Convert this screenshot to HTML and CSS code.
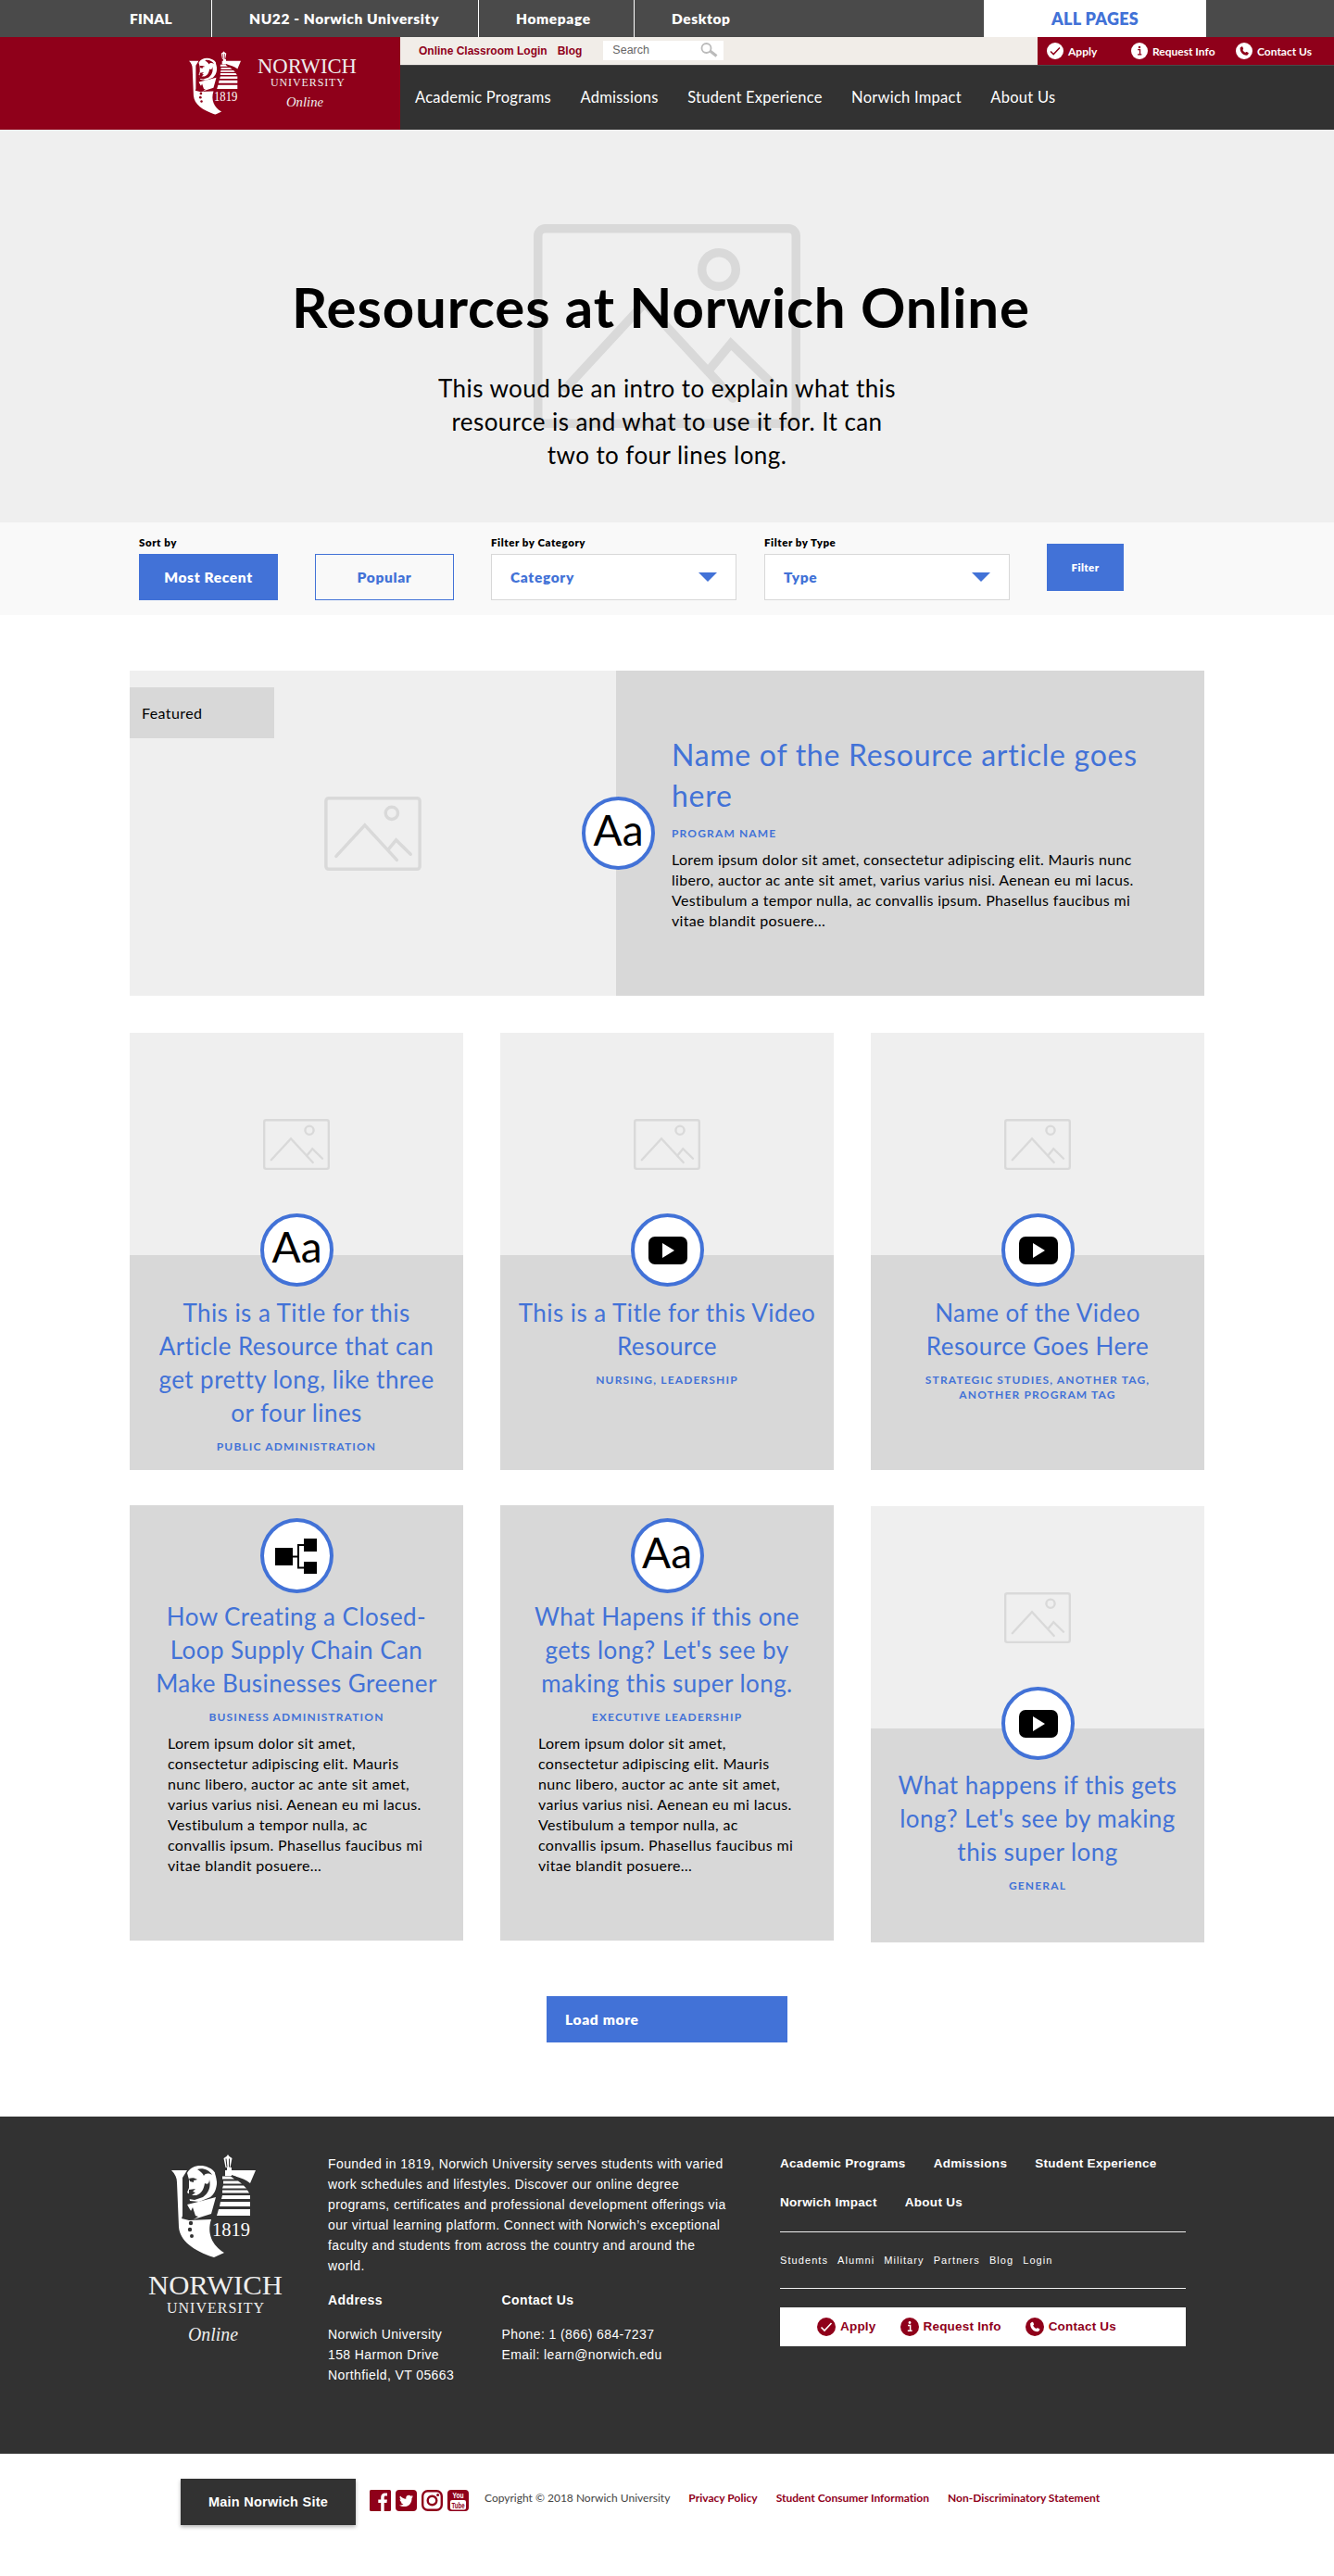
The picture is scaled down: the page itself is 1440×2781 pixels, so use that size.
FILE: index.html
```html
<!DOCTYPE html>
<html lang="en">
<head>
<meta charset="utf-8">
<title>Resources at Norwich Online</title>
<link rel="stylesheet" href="styles.css">
</head>
<body>
<svg class="defs" aria-hidden="true">
  <symbol id="picture" viewBox="0 0 288 220">
    <g fill="none" stroke="#d9d9d9" stroke-width="9.5" stroke-linecap="round">
      <rect x="4.75" y="4.75" width="278.5" height="210.5" rx="8"/>
      <circle cx="200" cy="49" r="18.3"/>
      <path d="M35 177 120 85 215 188M189 158l24-29 43 42" stroke-linejoin="miter"/>
    </g>
  </symbol>
  <symbol id="play" viewBox="0 0 42 30">
    <rect width="42" height="30" rx="7"/>
    <path d="M15 7v16l13-8z" fill="#fff"/>
  </symbol>
  <symbol id="chart" viewBox="0 0 46 40">
    <path d="M0 11h19v19H0zM31 1h14v14H31zM31 26h14v13H31z"/>
    <path d="M19 20.500h6M31 8h-6v24.500h6" fill="none" stroke="#000" stroke-width="2"/>
  </symbol>
  <symbol id="check" viewBox="0 0 20 20">
    <circle cx="10" cy="10" r="10" fill="currentColor"/>
    <path d="M4.500 10.500l3.500 3.500 7.500-8" fill="none" class="mark" stroke-width="1.600"/>
  </symbol>
  <symbol id="info" viewBox="0 0 20 20">
    <circle cx="10" cy="10" r="10" fill="currentColor"/>
    <path d="M8 8.500h2.600v5.500M7.800 14.300h4.800" fill="none" class="mark" stroke-width="1.500"/>
    <circle cx="10" cy="5.500" r="1.400" class="dot"/>
  </symbol>
  <symbol id="phone" viewBox="0 0 20 20">
    <circle cx="10" cy="10" r="10" fill="currentColor"/>
    <path d="M5.200 6.200 7 4.800c.6-.3 1.100 0 1.300.5l.7 1.800c.2.500 0 .9-.8 1.500.5 1.600 1.700 2.800 3.300 3.400.6-.8 1-1 1.500-.8l1.800.8c.6.300.7.800.4 1.400l-1.200 1.700C8.800 15.800 4.700 11.500 5.200 6.200z" class="dot"/>
  </symbol>
  <symbol id="shield" viewBox="0 0 91 111">
    <g fill="currentColor">
      <path d="M0 17h17l-5 8v41l-1 3 8 2 24-1c-5 15 1 28 14 36l-11 5C24 104 9 93 8 78L6 30c0-5-2-9-6-13z"/>
      <path d="M17 20c4-8 15-10 23-6 8 3 10 10 9 18-1 7-3 11-7 14l-12 5-10-1-1-5 1-2-3-2 2-5 0-9z"/>
      <path d="M17 54l12-3 19-5-5 18-19 6z"/>
      <path d="M46 17h12v6l3 0v-3l-1-3M65 17h26l-6 14c-5-5-12-6-20-9z"/>
      <path d="M55 23.500h9l4 3H55zM56 28.500h16l4 3H56zM56 33.500h22l3 3H55zM55 38.500h27l2 3H55zM55 44h30v4H54zM53 51h32v5H52zM51 59h34v7H49z"/>
      <path d="M60 14h5v9h-5zM56.500 4l3-2 1.500-2 1.500 2 3 2-2 10h-5z"/>
    </g>
    <g class="cut">
      <path d="M19 26c3-1 6-1 9 1l-4 1v2l-4-1zM19 38l7-1-3 3 3 1-4 3 5 0c6-2 8-7 9-13 3 2 5 0 5-4 2 8-1 15-7 19l-9 3-6-1zM28 16c6-2 13 1 16 6-4-2-7-2-9 1-1-3-4-5-7-7z"/>
      <path d="M13 66l7-3 3-6 3 9 3 1-5 3z"/>
      <circle cx="21" cy="74" r="2.200"/><circle cx="20" cy="81" r="2.200"/><circle cx="22" cy="88" r="2"/>
    </g>
    <path d="M15 53l10 16M48 20c5 16 3 30-3 46" class="seam"/>
    <path d="M59 4.500l1 9M62.500 4.500v9" class="seam thin"/>
  </symbol>
</svg>

<div class="crumbs">
  <span class="crumb crumb-first">FINAL</span>
  <span class="crumb crumb-project">NU22 - Norwich University</span>
  <span class="crumb crumb-page">Homepage</span>
  <span class="crumb crumb-device">Desktop</span>
  <a class="all-pages">ALL PAGES</a>
</div>

<header class="header">
  <div class="brand">
    <svg class="brand-shield" viewBox="0 0 91 111"><use href="#shield"/><text x="44" y="88" class="year" textLength="41" lengthAdjust="spacingAndGlyphs">1819</text></svg>
    <svg class="brand-name" viewBox="0 0 108 66">
      <text x="0" y="17" font-size="23" textLength="107" lengthAdjust="spacingAndGlyphs">NORWICH</text>
      <text x="14" y="31" font-size="12" textLength="80" lengthAdjust="spacing">UNIVERSITY</text>
      <text x="31" y="53" font-size="15" font-style="italic" textLength="40" lengthAdjust="spacingAndGlyphs">Online</text>
    </svg>
  </div>
  <div class="header-main">
    <div class="utility">
      <div class="utility-links">
        <a>Online Classroom Login</a><a>Blog</a>
        <div class="search"><span>Search</span>
          <svg width="20" height="16" viewBox="0 0 20 16"><g fill="none" stroke="#bbb"><circle cx="6.500" cy="6" r="5" stroke-width="1.800"/><path d="M10.500 9l7 5.500" stroke-width="3"/></g></svg>
        </div>
      </div>
      <div class="quick">
        <a class="q1"><svg><use href="#check"/></svg>Apply</a>
        <a class="q2"><svg><use href="#info"/></svg>Request Info</a>
        <a class="q3"><svg><use href="#phone"/></svg>Contact Us</a>
      </div>
    </div>
    <nav class="nav">
      <a>Academic Programs</a><a>Admissions</a><a>Student Experience</a><a>Norwich Impact</a><a>About Us</a>
    </nav>
  </div>
</header>

<section class="hero">
  <svg class="hero-picture"><use href="#picture"/></svg>
  <h1>Resources at Norwich Online</h1>
  <p>This woud be an intro to explain what this<br>resource is and what to use it for. It can<br>two to four lines long.</p>
</section>

<section class="filters">
  <div class="field"><label>Sort by</label><button class="btn sort">Most Recent</button></div>
  <button class="btn sort outline">Popular</button>
  <div class="field category"><label>Filter by Category</label><div class="select">Category<i></i></div></div>
  <div class="field type"><label>Filter by Type</label><div class="select">Type<i></i></div></div>
  <button class="btn apply">Filter</button>
</section>

<main class="main">
  <article class="featured">
    <div class="featured-image">
      <span class="tag">Featured</span>
      <svg><use href="#picture"/></svg>
      <div class="badge">Aa</div>
    </div>
    <div class="featured-text">
      <h2>Name of the Resource article goes<br>here</h2>
      <div class="program">PROGRAM NAME</div>
      <p>Lorem ipsum dolor sit amet, consectetur adipiscing elit. Mauris nunc<br>libero, auctor ac ante sit amet, varius varius nisi. Aenean eu mi lacus.<br>Vestibulum a tempor nulla, ac convallis ipsum. Phasellus faucibus mi<br>vitae blandit posuere…</p>
    </div>
  </article>

  <div class="grid">
    <article class="card">
      <div class="card-image"><svg><use href="#picture"/></svg><div class="badge">Aa</div></div>
      <h3>This is a Title for this<br>Article Resource that can<br>get pretty long, like three<br>or four lines</h3>
      <div class="program">PUBLIC ADMINISTRATION</div>
    </article>
    <article class="card">
      <div class="card-image"><svg><use href="#picture"/></svg><div class="badge"><svg class="play"><use href="#play"/></svg></div></div>
      <h3>This is a Title for this Video<br>Resource</h3>
      <div class="program">NURSING, LEADERSHIP</div>
    </article>
    <article class="card">
      <div class="card-image"><svg><use href="#picture"/></svg><div class="badge"><svg class="play"><use href="#play"/></svg></div></div>
      <h3>Name of the Video<br>Resource Goes Here</h3>
      <div class="program">STRATEGIC STUDIES, ANOTHER TAG,<br>ANOTHER PROGRAM TAG</div>
    </article>
    <article class="card card-plain">
      <div class="badge"><svg class="chart"><use href="#chart"/></svg></div>
      <h3>How Creating a Closed-<br>Loop Supply Chain Can<br>Make Businesses Greener</h3>
      <div class="program">BUSINESS ADMINISTRATION</div>
      <p>Lorem ipsum dolor sit amet,<br>consectetur adipiscing elit. Mauris<br>nunc libero, auctor ac ante sit amet,<br>varius varius nisi. Aenean eu mi lacus.<br>Vestibulum a tempor nulla, ac<br>convallis ipsum. Phasellus faucibus mi<br>vitae blandit posuere…</p>
    </article>
    <article class="card card-plain">
      <div class="badge">Aa</div>
      <h3>What Hapens if this one<br>gets long? Let's see by<br>making this super long.</h3>
      <div class="program">EXECUTIVE LEADERSHIP</div>
      <p>Lorem ipsum dolor sit amet,<br>consectetur adipiscing elit. Mauris<br>nunc libero, auctor ac ante sit amet,<br>varius varius nisi. Aenean eu mi lacus.<br>Vestibulum a tempor nulla, ac<br>convallis ipsum. Phasellus faucibus mi<br>vitae blandit posuere…</p>
    </article>
    <article class="card card-last">
      <div class="card-image"><svg><use href="#picture"/></svg><div class="badge"><svg class="play"><use href="#play"/></svg></div></div>
      <h3>What happens if this gets<br>long? Let's see by making<br>this super long</h3>
      <div class="program">GENERAL</div>
    </article>
  </div>

  <button class="btn load-more">Load more</button>
</main>

<footer class="footer">
  <div class="footer-brand">
    <svg class="footer-shield" viewBox="0 0 91 111"><use href="#shield"/><text x="44" y="88" class="year" textLength="41" lengthAdjust="spacingAndGlyphs">1819</text></svg>
    <svg class="footer-name" viewBox="0 0 146 95">
      <text x="0" y="38" font-size="30" textLength="145" lengthAdjust="spacingAndGlyphs">NORWICH</text>
      <text x="20" y="58" font-size="16" textLength="105" lengthAdjust="spacing">UNIVERSITY</text>
      <text x="43" y="88" font-size="21" font-style="italic" textLength="54" lengthAdjust="spacingAndGlyphs">Online</text>
    </svg>
  </div>
  <div class="about">
    <p>Founded in 1819, Norwich University serves students with varied<br>work schedules and lifestyles. Discover our online degree<br>programs, certificates and professional development offerings via<br>our virtual learning platform. Connect with Norwich’s exceptional<br>faculty and students from across the country and around the<br>world.</p>
    <div class="contacts">
      <div><h4>Address</h4><p>Norwich University<br>158 Harmon Drive<br>Northfield, VT 05663</p></div>
      <div><h4>Contact Us</h4><p>Phone: 1 (866) 684-7237<br>Email: learn@norwich.edu</p></div>
    </div>
  </div>
  <div class="footer-nav">
    <nav class="primary"><a>Academic Programs</a><a>Admissions</a><a>Student Experience</a><a>Norwich Impact</a><a>About Us</a></nav>
    <nav class="secondary"><a>Students</a><a>Alumni</a><a>Military</a><a>Partners</a><a>Blog</a><a>Login</a></nav>
    <div class="actions">
      <a><svg><use href="#check"/></svg>Apply</a>
      <a><svg><use href="#info"/></svg>Request Info</a>
      <a><svg><use href="#phone"/></svg>Contact Us</a>
    </div>
  </div>
</footer>

<div class="legal">
  <a class="main-site">Main Norwich Site</a>
  <div class="social">
    <svg viewBox="0 0 23 23"><rect width="23" height="23" rx="1.500"/><path d="M12.200 23v-9H9.300v-3.500h2.900V8c0-3 1.700-4.500 4.300-4.500l2.500.1v3h-1.700c-1.300 0-1.600.7-1.600 1.600v2.300h3.200l-.4 3.500h-2.800v9z" fill="#fff"/></svg>
    <svg viewBox="0 0 23 23"><rect width="23" height="23" rx="4"/><path d="M4 16.500c2 .1 3.400-.3 4.500-1.200-1.500-.1-2.400-.9-2.800-2h1.200c-1.500-.5-2.300-1.600-2.300-3.100l1.200.4C4.500 9.500 4.200 8 5 6.600c1.600 2 3.700 3 6.300 3.200-.5-2.400 1.200-4 3-4 1 0 1.700.4 2.300 1l2-.8c-.3.800-.7 1.300-1.300 1.700l1.700-.5-1.500 1.700c.2 5.500-3.500 9.200-8 9.200-2 0-3.900-.4-5.500-1.600z" fill="#fff"/></svg>
    <svg viewBox="0 0 23 23"><g fill="none" stroke="#8f001a"><rect x="1.200" y="1.200" width="20.600" height="20.600" rx="5.500" stroke-width="2.400"/><circle cx="11.500" cy="11.500" r="4.800" stroke-width="2.400"/></g><circle cx="17.600" cy="5.400" r="1.500"/></svg>
    <svg viewBox="0 0 23 23"><rect width="23" height="23" rx="4"/><rect x="3" y="11" width="17" height="10.500" rx="2" fill="#fff"/><text x="5.500" y="9.200" font-size="9" fill="#fff" textLength="12" lengthAdjust="spacingAndGlyphs">You</text><text x="4.500" y="19.700" font-size="9" textLength="14" lengthAdjust="spacingAndGlyphs">Tube</text></svg>
  </div>
  <span class="copyright">Copyright © 2018 Norwich University</span>
  <a>Privacy Policy</a><a>Student Consumer Information</a><a>Non-Discriminatory Statement</a>
</div>
</body>
</html>
```
FILE: styles.css
```css
* { box-sizing: border-box; }
body { margin: 0; width: 1440px; background: #fff; color: #000; font-family: Lato, sans-serif; }
h1, h2, h3, h4, p { margin: 0; }
a { white-space: nowrap; }
svg { display: block; flex: none; overflow: visible; }
.defs { position: absolute; width: 0; height: 0; }

/* Project bar */
.crumbs { display: flex; height: 40px; background: #4a4a4a; color: #fff; font-size: 15.5px; font-weight: 800; line-height: 40px; letter-spacing: 0.600px; white-space: nowrap; }
.crumb { border-right: 1px solid #fff; }
.crumb-first { width: 229px; padding-left: 140px; letter-spacing: 0.200px; }
.crumb-project { width: 288px; padding-left: 40px; }
.crumb-page { width: 168px; padding-left: 40px; }
.crumb-device { width: 377px; padding-left: 40px; border: 0; }
.all-pages { width: 240px; background: #fff; color: #4272d7; text-align: center; font-size: 18px; letter-spacing: 0.300px; }

/* Header */
.header { display: flex; height: 100px; }
.brand { display: flex; width: 432px; padding: 15px 0 0 204px; gap: 18px; background: #8f001a; color: #fff; --cut: #8f001a; }
.brand-shield { width: 56px; height: 69px; }
.brand-name { width: 108px; height: 66px; margin-top: 7px; }
.brand-name text, .footer-name text { font-family: "Liberation Serif", serif; fill: #eee; }
.cut { fill: var(--cut); }
.seam { fill: none; stroke: var(--cut); stroke-width: 2; }
.thin { stroke-width: 1; }
.year { font: 22px "Liberation Serif", serif; fill: #fff; }
.header-main { flex: 1; }
.utility { display: flex; height: 31px; background: #f1ede8; border-bottom: 1px solid #4a4a4a; }
.utility-links { display: flex; align-items: center; width: 688px; padding-left: 20px; gap: 11px; color: #8f001a; font: bold 12px "Liberation Sans", sans-serif; }
.search { display: flex; align-items: center; justify-content: space-between; width: 130px; height: 21px; margin: 0 0 2px 12px; padding: 0 5px 0 10px; background: #fff; color: #666; font-weight: normal; font-size: 12.500px; }
.quick { display: flex; flex: 1; align-items: center; background: #8f001a; color: #fff; font-size: 12px; font-weight: 700; --cut: #8f001a; }
.quick a, .actions a { display: flex; align-items: center; gap: 5px; }
.quick svg { width: 18px; height: 18px; }
.q1 { width: 91px; margin-left: 10px; }
.q2 { width: 113px; }
.mark { stroke: var(--cut); }
.dot { fill: var(--cut); }
.nav { display: flex; align-items: center; height: 69px; padding: 0 0 1px 16px; gap: 31.500px; background: #323232; color: #fff; font-size: 16.500px; letter-spacing: 0.250px; }

/* Hero */
.hero { position: relative; height: 424px; padding-top: 155px; background: #efefef; text-align: center; }
.hero-picture { position: absolute; left: 576px; top: 102px; width: 288px; height: 220px; }
.hero h1, .hero p { position: relative; }
.hero h1 { margin-right: 13px; font-size: 60px; font-weight: 700; line-height: 72px; letter-spacing: 0.850px; }
.hero p { margin-top: 34px; font-size: 26px; line-height: 36px; letter-spacing: 0.430px; }

/* Filters */
.filters { display: flex; height: 100px; padding: 0 0 16px 150px; align-items: flex-end; background: #f9f9f9; }
.btn { display: block; padding: 0; border: 0; background: #4272d7; color: #fff; font: 800 15.500px Lato, sans-serif; letter-spacing: 0.650px; }
.sort { width: 150px; height: 50px; }
.outline { margin: 0 40px; background: #f9f9f9; border: 1px solid #4272d7; color: #4272d7; }
label { display: block; margin-bottom: 5px; font-size: 11.500px; font-weight: 800; line-height: 14px; letter-spacing: 0.550px; }
.category { margin-right: 30px; }
.select { display: flex; align-items: center; justify-content: space-between; width: 265px; height: 50px; padding: 0 20px; border: 1px solid #d8d8d8; background: #fff; color: #4272d7; font-size: 15.500px; font-weight: 800; letter-spacing: 0.650px; }
.select i { border: 10px solid transparent; border-top-color: #4272d7; border-bottom: 0; }
.apply { width: 83px; height: 51px; margin: 0 0 10px 40px; font-size: 11.500px; letter-spacing: 0.400px; }

/* Resources */
.main { height: 1621px; padding: 60px 140px 0; }
.featured { display: flex; height: 351px; }
.featured-image { position: relative; display: flex; align-items: center; justify-content: center; width: 525px; background: #efefef; }
.featured-image > svg { width: 105px; height: 80px; }
.tag { position: absolute; left: 0; top: 18px; width: 156px; padding-left: 13px; background: #d8d8d8; font-size: 16px; line-height: 55px; letter-spacing: 0.400px; }
.badge { display: flex; align-items: center; justify-content: center; width: 79px; height: 79px; padding-bottom: 8px; border: 4px solid #4272d7; border-radius: 50%; background: #fff; font-size: 46px; line-height: 1; }
.badge:has(svg) { padding: 0; }
.featured .badge { position: absolute; left: 488px; top: 136px; }
.featured-text { flex: 1; padding: 69px 0 0 60px; background: #d8d8d8; white-space: nowrap; }
h2 { color: #4272d7; font-size: 32px; font-weight: 400; line-height: 44px; letter-spacing: 0.720px; }
.program { margin-top: 11px; color: #4272d7; font-size: 12px; font-weight: 700; line-height: 16px; letter-spacing: 1.150px; }
.featured p, .card p { margin-top: 9px; font-size: 16px; line-height: 22px; letter-spacing: 0.330px; }
.grid { display: grid; grid-template-columns: repeat(3, 360px); column-gap: 40px; align-items: start; margin-top: 40px; }
.card { height: 472px; margin-bottom: 38px; background: #d8d8d8; text-align: center; white-space: nowrap; }
.card-image { position: relative; display: flex; height: 240px; padding-top: 93px; justify-content: center; background: #efefef; }
.card-image > svg { width: 72px; height: 55px; }
.card-image .badge { position: absolute; left: 141px; top: 195px; }
.play { width: 42px; height: 30px; }
.chart { width: 46px; height: 40px; }
h3 { margin-top: 44px; color: #4272d7; font-size: 26px; font-weight: 400; line-height: 36px; letter-spacing: 0.450px; }
.card-plain { height: 470px; padding-top: 14px; }
.card-plain .badge { height: 81px; margin: 0 auto; }
.card-plain h3 { margin-top: 7px; }
.card-plain p { margin-left: 41px; text-align: left; }
.card-last { height: 471px; margin-top: 1px; }
.card-last h3 { margin-top: 43px; }
.load-more { width: 260px; height: 50px; margin: 20px auto 0; padding-left: 20px; text-align: left; }

/* Footer */
.footer { display: flex; height: 364px; background: #323232; color: #fff; font: 14px/22px "Liberation Sans", sans-serif; }
.footer-brand { width: 354px; padding: 41px 0 0 160px; --cut: #323232; }
.footer-shield { width: 91px; height: 111px; margin-left: 25px; }
.footer-name { width: 146px; height: 95px; margin-top: 2px; }
.about { width: 488px; padding-top: 40px; letter-spacing: 0.400px; white-space: nowrap; }
.contacts { display: flex; margin-top: 15px; }
.contacts > div { width: 187.500px; }
h4 { margin-bottom: 15px; font-size: 14px; }
.footer-nav { width: 438px; padding-top: 40px; }
.primary { display: flex; flex-wrap: wrap; gap: 20px 30px; padding-bottom: 20px; border-bottom: 1px solid #eee; font-size: 13.500px; font-weight: 700; letter-spacing: 0.300px; }
.secondary { display: flex; gap: 10px; height: 61px; align-items: center; border-bottom: 1px solid #eee; font-size: 11px; letter-spacing: 1.080px; }
.actions { display: flex; gap: 26px; height: 42px; margin-top: 20px; padding-left: 40px; background: #fff; color: #8f001a; font-size: 13.500px; font-weight: 700; letter-spacing: 0.200px; --cut: #fff; }
.actions svg { width: 20px; height: 20px; }

/* Legal bar */
.legal { display: flex; height: 132px; padding: 27px 0 0 195px; align-items: flex-start; font-size: 12px; line-height: 50px; color: #444; }
.legal > a { margin-left: 20px; margin-top: -4px; color: #8f001a; font-weight: 700; letter-spacing: 0.020px; }
.legal > .main-site { width: 189px; height: 50px; margin: 0; background: #323232; box-shadow: 0 2px 4px rgba(0, 0, 0, 0.300); color: #fff; text-align: center; font: bold 14.500px/50px "Liberation Sans", sans-serif; letter-spacing: 0.250px; }
.social { display: flex; gap: 5px; margin: 12px 17px 0 15px; fill: #8f001a; font-family: "Liberation Sans Narrow", "Liberation Sans", sans-serif; font-weight: 700; }
.social svg { width: 23px; height: 23px; }
.copyright { margin-top: -4px; white-space: nowrap; }
```
